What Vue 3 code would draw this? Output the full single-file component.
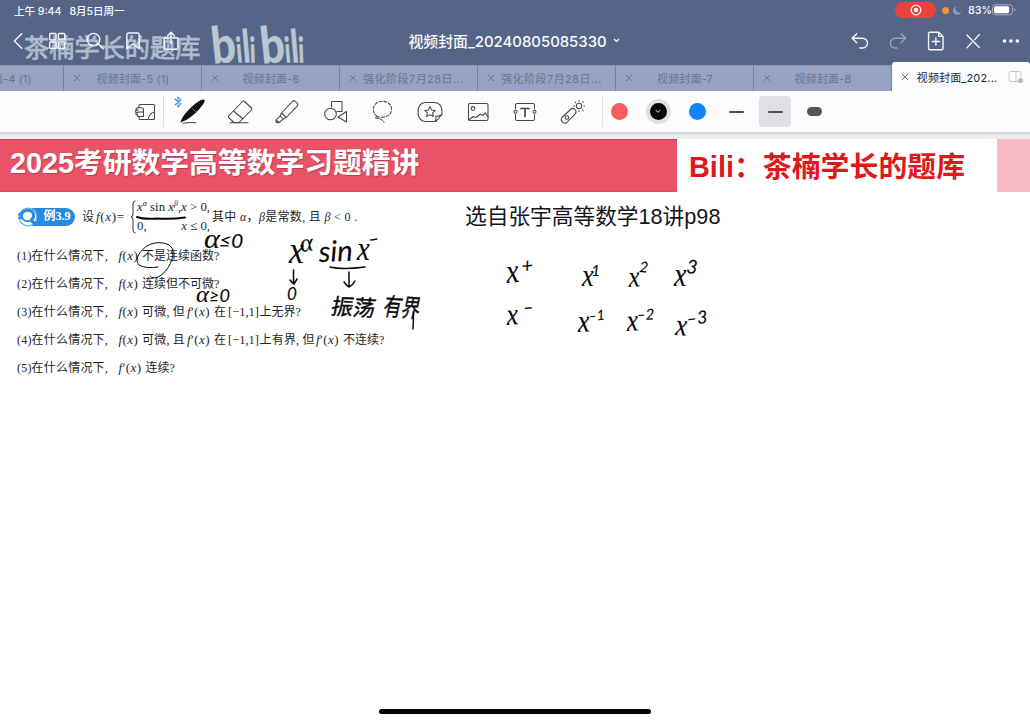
<script setup>
const tabs = [
  { name: '视频封面-4 (1)' },
  { name: '视频封面-5 (1)' },
  { name: '视频封面-6' },
  { name: '强化阶段7月28日...', long: true },
  { name: '强化阶段7月28日...', long: true },
  { name: '视频封面-7' },
  { name: '视频封面-8' },
  { name: '视频封面_202...', active: true },
]
const marks = [
  { t: 'x', x: 507, y: 283, s: 34, r: -6 }, { t: '+', x: 522, y: 273, s: 20, r: -5 },
  { t: 'x', x: 582, y: 286, s: 31, r: 0 }, { t: '1', x: 591, y: 276, s: 16, r: 0 },
  { t: 'x', x: 629, y: 287, s: 30, r: -4 }, { t: '2', x: 639, y: 272, s: 15, r: 5 },
  { t: 'x', x: 674, y: 286, s: 33, r: 0 }, { t: '3', x: 686, y: 273, s: 19, r: 5 },
  { t: 'x', x: 507, y: 325, s: 31, r: -4 }, { t: '–', x: 523, y: 314, s: 19, r: -3 },
  { t: 'x', x: 578, y: 332, s: 32, r: -3 }, { t: '–1', x: 589, y: 321, s: 14, r: -5 },
  { t: 'x', x: 627, y: 331, s: 31, r: -3 }, { t: '–2', x: 637, y: 320, s: 15, r: -2 },
  { t: 'x', x: 675, y: 335, s: 31, r: 3 }, { t: '–3', x: 687, y: 325, s: 18, r: -5 },
]
</script>

<template>
  <div class="app">
    <header class="head">
      <div class="watermark">
        <span>茶楠学长的题库</span>
        <svg class="brand" width="98" height="50" viewBox="0 0 98 50">
          <g class="brandtext">
            <text transform="translate(5 44) rotate(-6) scale(.84 1)" font-size="51">b</text>
            <text transform="translate(29 43) rotate(-5) scale(.66 1)" font-size="36">i</text>
            <text transform="translate(35.500 43) rotate(-5) scale(.68 1)" font-size="46">l</text>
            <text transform="translate(42 43) rotate(-2) scale(.66 1)" font-size="36">i</text>
            <text transform="translate(54 44) rotate(-6) scale(.84 1)" font-size="51">b</text>
            <text transform="translate(77.500 43) rotate(-5) scale(.66 1)" font-size="36">i</text>
            <text transform="translate(84 43) rotate(-5) scale(.68 1)" font-size="46">l</text>
            <text transform="translate(90.500 43) rotate(-2) scale(.66 1)" font-size="36">i</text>
          </g>
        </svg>
      </div>
      <div class="status">
        <span>上午 9:44</span><span class="date">8月5日周一</span>
        <div class="rec"><svg width="12" height="12" viewBox="0 0 12 12"><circle cx="6" cy="6" r="4.800" fill="none" stroke="#fff" stroke-width="1.200"/><circle cx="6" cy="6" r="2.200" fill="#fff"/></svg></div>
        <i class="mic"></i>
        <svg class="moon" width="9" height="9" viewBox="0 0 9 9"><path d="M3 .6A4.200 4.200 0 1 0 8.300 6 3.900 3.900 0 0 1 3 .6Z" fill="#929bb5"/></svg>
        <span class="pct">83%</span>
        <svg width="24" height="12" viewBox="0 0 24 12"><rect x=".5" y=".8" width="20" height="10" rx="3" fill="none" stroke="#a5aec4"/><rect x="2" y="2.300" width="15.200" height="7" rx="1.700" fill="#fff"/><path d="M22 4v3.600q1.400-.5 1.400-1.800T22 4Z" fill="#a5aec4"/></svg>
      </div>
      <div class="nav">
        <div class="group">
          <svg viewBox="0 0 24 24"><path d="M15 4 7 12l8 8"/></svg>
          <svg viewBox="0 0 24 24"><rect x="4" y="3.800" width="7" height="7" rx="1"/><rect x="13.500" y="3.800" width="7" height="7" rx="1"/><rect x="4" y="13" width="7" height="7" rx="1"/><rect x="13.500" y="13" width="7" height="7" rx="1"/></svg>
          <svg viewBox="0 0 24 24"><circle cx="10.500" cy="10.500" r="6.800"/><path d="m15.500 15 5.500 5.500"/></svg>
          <svg viewBox="0 0 24 24"><path d="M5.300 5q0-1.700 1.700-1.700h10q1.700 0 1.700 1.700v15.500L12 15l-6.700 5.500Z"/></svg>
          <svg viewBox="0 0 24 24"><path d="M9 8.500H6q-1.500 0-1.500 1.500v9.500q0 1.500 1.500 1.500h12q1.500 0 1.500-1.500V10q0-1.500-1.500-1.500h-3M12 15V3M8.300 6.300 12 2.500l3.700 3.800"/></svg>
        </div>
        <div class="title">视频封面_20240805085330
          <svg width="7" height="5" viewBox="0 0 7 5"><path d="m1 1 2.500 2.500L6 1"/></svg>
        </div>
        <div class="group right">
          <svg viewBox="0 0 24 24"><path d="M8.500 4 3.500 9l5 5M4 9h11a5.300 5.300 0 0 1 0 10.600h-3"/></svg>
          <svg viewBox="0 0 24 24" class="dim"><path d="m15.500 4 5 5-5 5M20 9H9a5.300 5.300 0 0 0 0 10.600h2"/></svg>
          <svg viewBox="0 0 24 24"><path d="M5.500 2.500h9.500l4.800 4.500v12.800q0 1.700-1.700 1.700H5.700Q4 21.500 4 19.800V4.200q0-1.700 1.500-1.700ZM15 2.800V7h4.500M12 8.500v8M8 12.500h8"/></svg>
          <svg viewBox="0 0 24 24"><path d="m5.500 5.500 13.500 13.500M19 5l-5 5.500M11 13.500 5.500 19.500"/></svg>
          <svg viewBox="0 0 24 24"><g fill="#fff" stroke="none"><circle cx="5" cy="12" r="2"/><circle cx="12" cy="12" r="2"/><circle cx="19" cy="12" r="2"/></g></svg>
        </div>
      </div>
      <div class="tabs">
        <div v-for="(t, i) in tabs" :key="i" class="tab" :class="{ active: t.active, long: t.long }">
          <svg class="close" width="8" height="8" viewBox="0 0 8 8"><path d="m1 1 6 6M7 1 1 7"/></svg>
          <span class="name">{{ t.name }}</span>
          <svg v-if="t.active" class="split" width="16" height="14" viewBox="0 0 16 14"><path d="M10 11.500H3q-2 0-2-2v-6q0-2 2-2h8q2 0 2 2V7M8 1.500v10"/><circle cx="12.500" cy="10.500" r="2.600" fill="#bbb" stroke="none"/></svg>
        </div>
      </div>
    </header>

    <div class="tools">
      <div class="cell first">
        <svg width="22" height="20" viewBox="0 0 22 20"><path d="M5 6V3.500q0-1 1-1h13.500q1 0 1 1v13q0 1-1 1H6q-1 0-1-1V15M20.500 10q-5 1-6.500 7.500M4 5.800h3.500q2 0 2 2V14.500H4M4 10h5.500M4 5.800Q1.500 6 2 7.500L4 8M4 8Q.8 8.500 1.300 10L4 10.500q-3 .5-2 2l2 .3q-1.500 1 0 1.700"/></svg>
      </div>
      <i class="divider"></i>
      <div class="cell">
        <svg class="bt" width="8" height="12" viewBox="0 0 8 12"><path d="m1 3 6 5-3 3V1l3 3-6 5"/></svg>
        <svg width="28" height="26" viewBox="0 0 28 26"><path d="M2.500 23.500Q4 17.500 10 11.500 17 4 23 1q2.800-1.200 3.500 0 .5 1.200-1 3.700Q21.500 11 14 17 8.500 21.500 2.500 23.500Z" fill="#111" stroke="none"/><path d="m14.500 9.500 4 4" stroke="#999" stroke-width=".7"/><path d="M5 24.200q5-1 13-.5"/></svg>
      </div>
      <div class="cell"><svg width="28" height="28" viewBox="0 0 28 28"><path d="m3 17.500 13.500-14q1-1 2 0l7 6.500q1 1 0 2l-12.500 12.500H8l-5-4.700q-1.200-1.100 0-2.300ZM7.500 13l9.500 8M4 24.800h18"/></svg></div>
      <div class="cell"><svg width="28" height="28" viewBox="0 0 28 28"><path d="M8.500 15 19.500 3.300q1.300-1.300 2.600 0l2.300 2q1 1.300 0 2.500L13.300 19.500ZM8.500 15l-1.300 3 3 3 3.100-1.500M7 18l-4 4.200v1.800l1.200.8h1.600l4.400-3.800M3 22l3 2.500"/></svg></div>
      <div class="cell"><svg width="28" height="28" viewBox="0 0 28 28"><path d="M10.500 9V3.500h10.500v10h-5"/><circle cx="9.500" cy="16" r="5.800"/><path d="m25.500 13.500-8.500 5.500 8.500 5Z"/></svg></div>
      <div class="cell"><svg width="28" height="28" viewBox="0 0 28 28"><path stroke-dasharray="3 1.700" d="M8.500 18.500C1 14 4 3.300 13.500 3.300 25 3.500 26 18 14.500 19q-4 .5-6-.5-3 .5-1.500 1.700Q12 20 15 24.200"/></svg></div>
      <div class="cell"><svg width="28" height="24" viewBox="0 0 28 24"><path d="M19 21.500H9.500Q2 21 2 12t7.500-9.500h9Q26 3 26 12v2.500l-6 7h-1Q20.500 20 20 16q2 1 6-1.500"/><path d="m14 6.500 1.600 3.400 3.700.5-2.700 2.500.7 3.700-3.300-1.900-3.300 1.900.7-3.700-2.700-2.500 3.700-.5Z"/></svg></div>
      <div class="cell"><svg width="26" height="24" viewBox="0 0 26 24"><rect x="3.500" y="3.500" width="19.500" height="17" rx="1.500"/><circle cx="8" cy="8.500" r="1.900"/><path d="m4 20 4-3.500 3 1 4.500-3.500 2 1.500 3-2.500 2.500 4"/></svg></div>
      <div class="cell"><svg width="26" height="24" viewBox="0 0 26 24"><path d="M3.500 9V5q0-1.500 1.500-1.500h16q1.500 0 1.500 1.500v4M3.500 14.500V19q0 1.500 1.500 1.500h16q1.500 0 1.500-1.500v-4.500"/><circle cx="3.500" cy="11.700" r="1.500"/><circle cx="22.500" cy="11.700" r="1.500"/><path d="M9 8.500h8M13 8.500v8" stroke-width="1.700"/></svg></div>
      <div class="cell"><svg width="28" height="28" viewBox="0 0 28 28"><path d="M3 19.500 12 11q2-1.500 4 .5t.3 4.300l-8.500 8.700q-2 1.700-4.300-.3T3 19.500Z"/><circle cx="8" cy="19.500" r="1.800"/><circle cx="20" cy="8" r="2.700"/><path d="M20 2.500v.8M20 12.800v.8M14.500 8h.8M24.800 8h.8M16 4l.7.7M23.500 4.500l.7-.7M23.500 11.500l.7.7"/></svg></div>
      <i class="divider second"></i>
      <div class="ink"><b class="dot red"></b></div>
      <div class="ink"><b class="dot black"><svg width="6" height="5" viewBox="0 0 7 5"><path d="m1 1 2.500 2.500L6 1" stroke="#fff"/></svg></b></div>
      <div class="ink"><b class="dot blue"></b></div>
      <div class="ink"><b class="line"></b></div>
      <div class="ink"><div class="sel"><b class="line"></b></div></div>
      <div class="ink"><b class="line thick"></b></div>
    </div>

    <div class="banner">
      <h1>2025考研数学高等数学习题精讲</h1>
      <h2>Bili：茶楠学长的题库</h2>
      <i class="pink"></i>
    </div>

    <main class="page">
      <section class="problem">
        <div class="stem">
          <div class="badge">
            <svg width="22" height="22" viewBox="0 0 22 22"><circle cx="11" cy="11" r="8.800" fill="#fff" stroke="#6bb5ea" stroke-width="1.300"/><path d="M5 13Q3 6 9 4.500q6-1 7.500 4 .5 4-2.500 6l4 3" stroke="#2789dc" stroke-width="3"/><path d="M5 12q3 4 7 3" stroke="#2789dc" stroke-width="1.800"/><path d="m1 9 3-2M1 12h3" stroke="#2789dc" stroke-width="1.600"/></svg>
            <span>例3.9</span>
          </div>
          <span class="let">设<span class="m"><em>f</em>(<em>x</em>)=</span></span>
          <svg class="brace" width="6" height="34" viewBox="0 0 6 34"><path d="M5.500 1Q3 1 3 4v10q0 3-2 3 2 0 2 3v10q0 3 2.500 3"/></svg>
          <div class="cases">
            <div><em>x</em><sup>α</sup> sin <em>x</em><sup>β</sup>,<em>x</em> &gt; 0,</div>
            <div class="low"><span>0,</span><span><em>x</em> ≤ 0,</span></div>
          </div>
          <span class="cond">其中 <em>α</em>，<em>β</em>是常数, 且 <em>β</em> &lt; 0 .</span>
        </div>
        <p><span class="lead">(1)在什么情况下,</span><span class="fx"><em>f</em>(<em>x</em>)</span>不是连续函数?</p>
        <p><span class="lead">(2)在什么情况下,</span><span class="fx"><em>f</em>(<em>x</em>)</span>连续但不可微?</p>
        <p><span class="lead">(3)在什么情况下,</span><span class="fx"><em>f</em>(<em>x</em>)</span><span class="mid">可微, 但</span><span class="fp"><em>f</em>′(<em>x</em>)</span><span class="at">在</span><span class="range">[−1,1]</span>上无界?</p>
        <p><span class="lead">(4)在什么情况下,</span><span class="fx"><em>f</em>(<em>x</em>)</span><span class="mid">可微, 且</span><span class="fp"><em>f</em>′(<em>x</em>)</span><span class="at">在</span><span class="range">[−1,1]</span><span class="bound">上有界, 但</span><span class="fp"><em>f</em>′(<em>x</em>)</span>不连续?</p>
        <p><span class="lead">(5)在什么情况下,</span><span class="fp"><em>f</em>′(<em>x</em>)</span>连续?</p>
      </section>
      <div class="source">选自张宇高等数学18讲p98</div>
    </main>

    <svg class="notes" width="1030" height="720" viewBox="0 0 1030 720">
      <g class="hand">
        <text v-for="(m, i) in marks" :key="i" :class="{ sup: m.t !== 'x' }" :transform="`translate(${m.x} ${m.y}) rotate(${m.r}) scale(${m.t === 'x' ? 0.85 : 1} 1)`" :font-size="m.s">{{ m.t }}</text>
        <text x="204" y="248" font-size="28" textLength="16" lengthAdjust="spacingAndGlyphs">α</text>
        <text class="sup" transform="translate(219 247) rotate(2)" font-size="19" textLength="24" lengthAdjust="spacingAndGlyphs">≤0</text>
        <text x="196" y="302" font-size="24" textLength="13" lengthAdjust="spacingAndGlyphs">α</text>
        <text class="sup" x="209" y="302" font-size="17" textLength="21" lengthAdjust="spacingAndGlyphs">≥0</text>
        <text transform="translate(289 263) scale(.9 1)" font-size="37">x</text>
        <text transform="translate(301 252) rotate(-8)" font-size="25">α</text>
        <text class="sup" transform="translate(319 262) rotate(-2)" font-size="29" textLength="34" lengthAdjust="spacingAndGlyphs">sin</text>
        <text transform="translate(357 260) scale(.85 1)" font-size="34">x</text>
        <text class="sup" transform="translate(369 246) rotate(-8)" font-size="19">–</text>
        <text class="sup" x="287" y="300" font-size="17">0</text>
        <text class="han" transform="translate(330 314) rotate(3) skewX(-8)" font-size="22">振荡</text>
        <text class="han" transform="translate(382 315) rotate(4) skewX(-8) scale(.8 1.080)" font-size="23">有界</text>
      </g>
      <g class="stroke">
        <path d="M137 217q7 2.500 20 1.500 15 1 28-1" stroke-width="2"/>
        <path d="M158 267q-12 2-19-2c-6-7 4-18 12-21 9-3 21-1 22 7 1 10-8 25-18 27q-4 0-5-2" stroke-width="1"/>
        <path d="M330 267q12 3 35 0M293.500 270v13M290 280q2 3 4 4l3-5M349 272v14M344 282q3 4 5 5 4-2 6-6M413.500 312q0 8-.5 17" stroke-width="1.500"/>
      </g>
    </svg>
    <i class="home"></i>
  </div>
</template>

<style>
body { margin: 0; background: #fff; }
</style>

<style scoped>
.app { position: relative; width: 1030px; height: 720px; overflow: hidden; background: #fff; font-family: Inter, "Noto Sans CJK SC", sans-serif; }
.app * { box-sizing: border-box; }
svg { fill: none; flex: none; }
.head { position: relative; height: 91px; background: #566488; color: #f7faff; }
.watermark { position: absolute; left: 24px; top: 20px; display: flex; color: #b0bccf; }
.watermark span { font: 400 25.200px/50px "Noto Sans CJK SC", sans-serif; width: 184px; padding-top: 1px; white-space: nowrap; -webkit-text-stroke: .8px #b0bccf; }
.brand { overflow: visible; }
.brandtext { fill: #b9c8cf; font-family: Lato, sans-serif; font-weight: 900; }
.status { position: relative; display: flex; align-items: center; height: 20px; padding: 0 14px; font-size: 10.500px; font-weight: 500; }
.date { margin-left: 8px; }
.rec { display: flex; align-items: center; justify-content: center; width: 41px; height: 16px; border-radius: 8px; background: #e8433d; margin-left: auto; }
.mic { width: 7px; height: 7px; border-radius: 50%; background: #e99a2c; margin: 0 4px 0 6px; }
.pct { width: 23px; margin: 0 1px 0 6px; font-size: 10.800px; letter-spacing: -.1px; }
.nav { position: relative; display: grid; grid-template-columns: 190px 1fr 189px; height: 42px; align-items: center; }
.group { display: flex; }
.group svg { width: 38px; height: 22px; stroke: #f3f8ff; stroke-width: 1.500; stroke-linecap: round; stroke-linejoin: round; }
.right svg { width: 37.800px; }
.group .dim { stroke: #9aa4bd; }
.title { display: flex; align-items: center; justify-content: center; gap: 6px; font-size: 14.900px; font-weight: 500; white-space: nowrap; margin: -1px 0 0 -3px; }
.title svg { stroke: #fff; stroke-width: 1.200; }
.tabs { position: relative; display: flex; margin: 3px 0 0 -74px; height: 26px; }
.tab { display: flex; align-items: center; flex: none; width: 138px; background: rgba(168, 181, 210, .78); border-right: 1px solid #7482a4; border-top: 1px solid #8794b3; padding: 0 8px 2px 9px; color: #69748f; font-size: 11px; }
.close { stroke: #6d7890; stroke-width: 1; }
.name { flex: 1; text-align: center; padding-right: 8px; white-space: nowrap; letter-spacing: .15px; }
.long .name { padding: 0 0 0 1px; letter-spacing: .45px; }
.tab.active { background: #fcfcfe; color: #262830; border: 0; border-radius: 3px 3px 0 0; margin-top: -3px; padding: 0 6px 0 9px; }
.active .name { padding: 0 3px 0 0; }
.split { stroke: #c4c5ca; stroke-width: 1; }
.tools { display: flex; align-items: center; height: 41px; padding-left: 126px; background: #fcfcfe; }
.tools svg { stroke: #45464b; stroke-width: 1.050; stroke-linecap: round; stroke-linejoin: round; }
.cell { position: relative; display: flex; justify-content: center; flex: none; width: 47.600px; }
.first { width: 37px; }
.divider { width: 1px; height: 31px; background: #e1e1e5; margin-right: 4.500px; }
.second { margin: 0 -3.500px 0 5.500px; }
.tools .bt { position: absolute; left: 5px; top: -3px; stroke: #3a8ce8; }
.ink { display: flex; align-items: center; justify-content: center; width: 39px; flex: none; }
.dot { display: flex; align-items: center; justify-content: center; width: 17px; height: 17px; border-radius: 50%; }
.red { background: #f45e60; }
.black { background: #050507; box-shadow: 0 0 0 4px #e0e0e4; }
.blue { background: #1084fb; }
.line { width: 15px; height: 2px; background: #4e4f52; border-radius: 1px; }
.thick { height: 9px; border-radius: 4.500px; background: #555659; }
.sel { display: flex; align-items: center; justify-content: center; width: 32px; height: 31px; border-radius: 4px; background: #e0e0e4; }
.banner { display: flex; height: 60px; background: linear-gradient(#cfced3, #eeedf0 4px, #eeedf0 7px, #fff 7px); padding-top: 7px; }
.banner h1 { margin: 0; width: 677px; padding-left: 10px; background: #e95367; border-top: 1px solid #b94059; border-bottom: 1px solid #c95468; color: #fff; font: 700 28.900px/47px "Liberation Sans", "Noto Sans CJK SC", sans-serif; letter-spacing: -.1px; text-shadow: 1px 1px 1px #7d304388; white-space: nowrap; }
.banner h2 { margin: 0; width: 320px; padding-left: 12px; color: #df181c; font: 700 28.900px/57px "Liberation Sans", "Noto Sans CJK SC", sans-serif; white-space: nowrap; }
.pink { flex: 1; background: #f8bac4; }
.page { display: flex; color: #252529; }
.problem { width: 465px; padding: 6px 0 0 17px; font: 12px/28px "Liberation Serif", "Noto Sans CJK SC", serif; white-space: nowrap; }
.stem { display: flex; align-items: center; height: 44px; font-size: 12px; line-height: 18px; padding-bottom: 6px; }
.badge { display: flex; align-items: center; width: 65px; }
.badge svg { position: relative; z-index: 1; margin-right: -8px; }
.badge span { width: 44px; height: 18px; padding-left: 8px; line-height: 17px; border-radius: 2px 9px 9px 2px; background: #268bde; color: #fff; font-weight: 700; text-align: center; }
.let { width: 48px; }
.m { font-size: 13px; padding-left: 2px; letter-spacing: .7px; }
.brace { stroke: #303035; stroke-width: 1; margin-right: 1px; }
.cases { width: 75px; line-height: 19px; font-size: 12.800px; }
.cases div { height: 19px; }
.cases sup { font-size: 8px; line-height: 0; font-style: italic; }
.low { display: flex; justify-content: space-between; padding-right: 2px; }
.cond { letter-spacing: .32px; }
.problem p { margin: 0; height: 27.900px; }
.problem p span { display: inline-block; }
.problem .lead { width: 101.500px; letter-spacing: .2px; }
.problem .fx { width: 23.500px; font-size: 13px; letter-spacing: .4px; }
.problem .fp { width: 27px; font-size: 13px; letter-spacing: .4px; }
.problem .mid { width: 45px; letter-spacing: .2px; }
.problem .at { width: 14px; }
.problem .range { width: 31.500px; font-size: 12.500px; }
.problem .bound { width: 56.500px; letter-spacing: .2px; }
.source { padding-top: 8px; font: 21.700px/34px "Liberation Sans", "Noto Sans CJK SC", sans-serif; color: #15151a; white-space: nowrap; }
.notes { position: absolute; left: 0; top: 0; pointer-events: none; }
.hand { fill: #09090b; stroke: #09090b; stroke-width: .1; font-family: "Liberation Serif", serif; font-style: italic; }
.hand .sup { font-family: Lato, "Liberation Sans", sans-serif; font-style: italic; }
.hand .han { font-family: "Noto Sans CJK SC", sans-serif; font-style: normal; stroke-width: .4; }
.stroke { stroke: #09090b; stroke-linecap: round; stroke-linejoin: round; }
.home { position: absolute; left: 379px; bottom: 6px; width: 272px; height: 5px; border-radius: 3px; background: #050507; }
</style>
